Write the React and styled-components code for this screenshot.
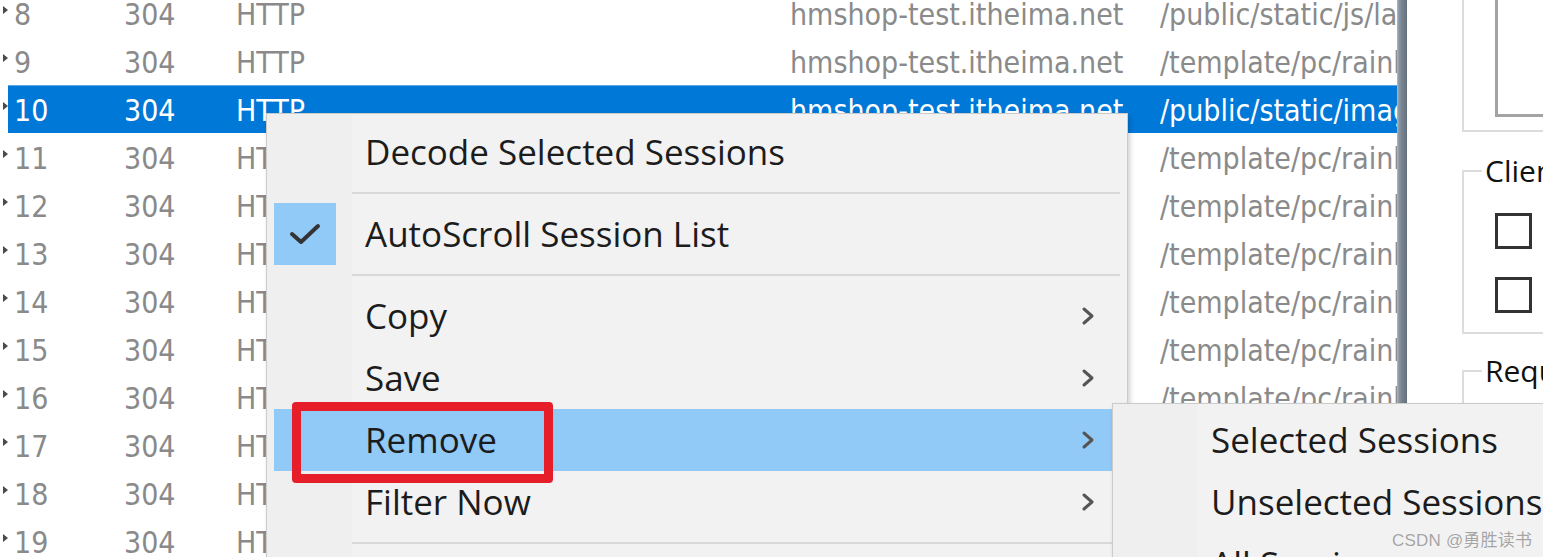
import React from 'react';
import styled, { createGlobalStyle } from 'styled-components';

const GlobalStyle = createGlobalStyle`
  html, body { margin: 0; padding: 0; background: #ffffff; }
  body { font-family: "Open Sans", "Liberation Sans", sans-serif; overflow: hidden; }
  * { box-sizing: border-box; }
`;

const Page = styled.div`
  position: relative;
  width: 1543px;
  height: 557px;
  overflow: hidden;
  display: flex;
  background: #ffffff;
`;

const SessionList = styled.div`
  width: 1397px;
  flex: none;
  height: 100%;
  overflow: hidden;
`;

const Rows = styled.div`
  display: flex;
  flex-direction: column;
  margin-top: -11px;
`;

const Row = styled.div`
  display: flex;
  height: 48px;
  font-family: "DejaVu Sans Condensed", "DejaVu Sans", sans-serif;
  font-stretch: condensed;
  font-size: 30px;
`;

const Marker = styled.div`
  width: 8px;
  flex: none;
  display: flex;
  align-items: center;
  padding-left: 3px;
  padding-bottom: 6px;
  &::before {
    content: "";
    display: block;
    border-left: 5px solid #4a4a4a;
    border-top: 4.5px solid transparent;
    border-bottom: 4.5px solid transparent;
  }
`;

const RowBody = styled.div`
  flex: 1;
  min-width: 0;
  display: grid;
  grid-template-columns: 110px 112px 554px 370px minmax(0, 1fr);
  align-items: center;
  padding: 2px 0 0 6px;
  white-space: nowrap;
  overflow: hidden;
  background: ${(p) => (p.$selected ? '#0078d7' : 'transparent')};
  border-top: 1px solid ${(p) => (p.$selected ? '#5aa7e6' : 'transparent')};
  color: ${(p) => (p.$selected ? '#ffffff' : '#8a8a8a')};
`;

const Cell = styled.span`
  overflow: hidden;
`;

const Splitter = styled.div`
  width: 10px;
  flex: none;
  height: 100%;
  background: linear-gradient(to right, #b3bac3 0, #8a95a3 2px, #76828f 50%, #66717e 100%);
`;

const RightPanel = styled.div`
  flex: 1;
  min-width: 0;
  height: 100%;
  overflow: hidden;
  display: flex;
  flex-direction: column;
  padding-left: 55px;
`;

const HostsGroup = styled.div`
  width: 200px;
  height: 132px;
  flex: none;
  border-left: 2px solid #dcdcdc;
  border-bottom: 2px solid #dcdcdc;
  padding-left: 31px;
`;

const HostsBox = styled.div`
  width: 200px;
  height: 117px;
  border-left: 3px solid #a3a3a3;
  border-bottom: 3px solid #a3a3a3;
  background: #ffffff;
`;

const Group = styled.fieldset`
  width: 220px;
  margin: ${(p) => p.$mt}px 0 0 0;
  padding: 0 0 0 31px;
  border: 2px solid #dcdcdc;
  border-right: none;
  min-height: ${(p) => p.$h}px;
  flex: none;
`;

const GroupTitle = styled.legend`
  font-family: "Open Sans", sans-serif;
  font-size: 30px;
  line-height: 34px;
  color: #111;
  padding: 0 3px;
  margin-left: -13px;
  white-space: nowrap;
`;

const CheckList = styled.div`
  display: flex;
  flex-direction: column;
  gap: 28px;
  padding: 25px 0 18px;
`;

const CheckBox = styled.span`
  display: block;
  width: 37px;
  height: 36px;
  border: 3px solid #333333;
  background: #ffffff;
`;

const Menu = styled.div`
  position: absolute;
  left: ${(p) => p.$x}px;
  top: ${(p) => p.$y}px;
  width: ${(p) => p.$w}px;
  height: ${(p) => p.$h}px;
  padding-top: ${(p) => p.$pad}px;
  background: linear-gradient(to right, #efefef 0, #efefef 85px, #f2f2f2 85px);
  border: 1px solid #cbcbcb;
  box-shadow: 2px 3px 5px rgba(0, 0, 0, 0.18);
  font-family: "Open Sans", sans-serif;
  font-size: 35px;
  color: #1c1c1c;
  display: flex;
  flex-direction: column;
`;

const MenuItem = styled.div`
  display: flex;
  align-items: center;
  height: 62px;
  flex: none;
  margin: 0 7px;
  background: ${(p) => (p.$active ? '#91c9f7' : 'transparent')};
`;

const Gutter = styled.div`
  width: 78px;
  height: 100%;
  flex: none;
  display: flex;
  align-items: center;
`;

const CheckMark = styled.div`
  width: 62px;
  height: 62px;
  background: #91c9f7;
  display: flex;
  align-items: center;
  justify-content: center;
`;

const ItemLabel = styled.span`
  flex: 1;
  padding-left: 13px;
  white-space: nowrap;
  line-height: 1;
  padding-bottom: 2px;
`;

const Chevron = styled.svg`
  width: 16px;
  height: 20px;
  margin-right: 24px;
  flex: none;
`;

const Separator = styled.div`
  height: 20px;
  flex: none;
  margin: 0 7px 0 85px;
  display: flex;
  align-items: center;
  &::after {
    content: "";
    display: block;
    width: 100%;
    height: 2px;
    background: #d8d8d8;
  }
`;

const Highlight = styled.div`
  position: absolute;
  left: 292px;
  top: 402px;
  width: 261px;
  height: 81px;
  border: 9px solid #e61e2a;
  border-radius: 4px;
`;

const Watermark = styled.div`
  position: absolute;
  left: 1392px;
  top: 526px;
  font-family: "Liberation Sans", "Noto Sans CJK SC", sans-serif;
  font-size: 17px;
  color: #a4a4a4;
  text-shadow: 0 0 1px #ffffff;
  white-space: nowrap;
  letter-spacing: 0.2px;
`;

const sessions = [
  { id: 8, url: '/public/static/js/layer' },
  { id: 9, url: '/template/pc/rainbow' },
  { id: 10, url: '/public/static/images', selected: true },
  { id: 11, url: '/template/pc/rainbow' },
  { id: 12, url: '/template/pc/rainbow' },
  { id: 13, url: '/template/pc/rainbow' },
  { id: 14, url: '/template/pc/rainbow' },
  { id: 15, url: '/template/pc/rainbow' },
  { id: 16, url: '/template/pc/rainbow' },
  { id: 17, url: '/template/pc/rainbow' },
  { id: 18, url: '/template/pc/rainbow' },
  { id: 19, url: '/template/pc/rainbow' },
];

const Arrow = () => (
  <Chevron viewBox="0 0 16 20">
    <polyline points="4,3 12,10 4,17" fill="none" stroke="#555" strokeWidth="3" strokeLinejoin="round" strokeLinecap="round" />
  </Chevron>
);

export default function App() {
  return (
    <>
      <GlobalStyle />
      <Page>
        <SessionList>
          <Rows>
            {sessions.map((s) => (
              <Row key={s.id}>
                <Marker />
                <RowBody $selected={s.selected}>
                  <Cell>{s.id}</Cell>
                  <Cell>304</Cell>
                  <Cell>HTTP</Cell>
                  <Cell>hmshop-test.itheima.net</Cell>
                  <Cell>{s.url}</Cell>
                </RowBody>
              </Row>
            ))}
          </Rows>
        </SessionList>
        <Splitter />
        <RightPanel>
          <HostsGroup>
            <HostsBox />
          </HostsGroup>
          <Group $mt={22} $h={180}>
            <GroupTitle>Client Process</GroupTitle>
            <CheckList>
              <CheckBox />
              <CheckBox />
            </CheckList>
          </Group>
          <Group $mt={20} $h={300}>
            <GroupTitle>Request Headers</GroupTitle>
          </Group>
        </RightPanel>

        <Menu $x={266} $y={113} $w={862} $h={520} $pad={7}>
          <MenuItem>
            <Gutter />
            <ItemLabel>Decode Selected Sessions</ItemLabel>
          </MenuItem>
          <Separator />
          <MenuItem>
            <Gutter>
              <CheckMark>
                <svg width="34" height="26" viewBox="0 0 34 26">
                  <polyline points="4,13 13,21 30,5" fill="none" stroke="#333" strokeWidth="4" strokeLinejoin="round" strokeLinecap="round" />
                </svg>
              </CheckMark>
            </Gutter>
            <ItemLabel>AutoScroll Session List</ItemLabel>
          </MenuItem>
          <Separator />
          <MenuItem>
            <Gutter />
            <ItemLabel>Copy</ItemLabel>
            <Arrow />
          </MenuItem>
          <MenuItem>
            <Gutter />
            <ItemLabel>Save</ItemLabel>
            <Arrow />
          </MenuItem>
          <MenuItem $active>
            <Gutter />
            <ItemLabel>Remove</ItemLabel>
            <Arrow />
          </MenuItem>
          <MenuItem>
            <Gutter />
            <ItemLabel>Filter Now</ItemLabel>
            <Arrow />
          </MenuItem>
          <Separator />
          <MenuItem>
            <Gutter />
            <ItemLabel>Comment...</ItemLabel>
          </MenuItem>
        </Menu>

        <Menu $x={1112} $y={403} $w={520} $h={220} $pad={5}>
          <MenuItem>
            <Gutter />
            <ItemLabel>Selected Sessions</ItemLabel>
          </MenuItem>
          <MenuItem>
            <Gutter />
            <ItemLabel>Unselected Sessions</ItemLabel>
          </MenuItem>
          <MenuItem>
            <Gutter />
            <ItemLabel>All Sessions</ItemLabel>
          </MenuItem>
        </Menu>

        <Highlight />
        <Watermark>CSDN @勇胜读书</Watermark>
      </Page>
    </>
  );
}
